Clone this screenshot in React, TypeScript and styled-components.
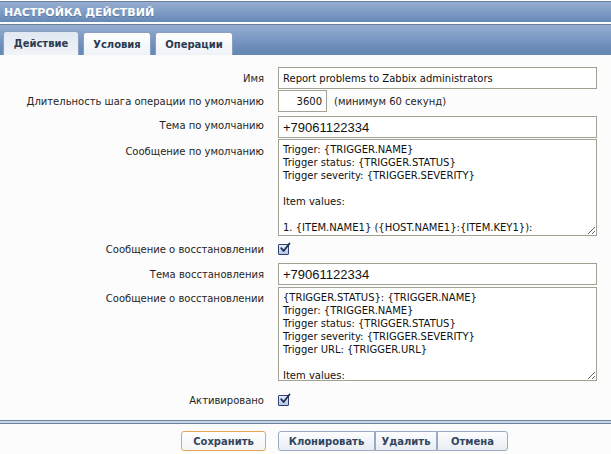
import React from 'react'
import styled, { createGlobalStyle } from 'styled-components'

const GlobalStyle = createGlobalStyle`
  html, body {
    margin: 0;
    padding: 0;
    background: #fcfcfc;
  }
  body {
    font-family: "DejaVu Sans", Verdana, sans-serif;
    font-size: 10px;
    color: #1f1f1f;
  }
`

const Page = styled.div`
  width: 611px;
  height: 454px;
  overflow: hidden;
  background: #fcfcfc;
  display: flex;
  flex-direction: column;
`

const TitleBar = styled.header`
  margin-top: 1px;
  height: 20px;
  border-top: 1px solid #6b7e97;
  background: linear-gradient(#96aed1, #6689b6);
  display: flex;
  align-items: center;
  padding-left: 4px;
`

const Title = styled.h1`
  margin: 0;
  font-size: 11px;
  font-weight: bold;
  color: #fff;
  text-shadow: 0 1px 0 rgba(40, 60, 90, 0.35);
`

const TabBar = styled.nav`
  margin-top: 2px;
  height: 30px;
  border-top: 1px solid #6b7e97;
  background: linear-gradient(#96aed1 0%, #6a8cb8 75%, #6588b4 100%);
  display: flex;
  align-items: flex-end;
  gap: 4px;
  padding-left: 3px;
`

const Tab = styled.div<{ $active?: boolean; $width: number }>`
  box-sizing: border-box;
  width: ${p => p.$width}px;
  height: ${p => (p.$active ? 24 : 23)}px;
  display: flex;
  align-items: center;
  justify-content: center;
  border: 1px solid #8aa0bf;
  border-bottom: none;
  border-radius: 3px 3px 0 0;
  background: ${p =>
    p.$active
      ? 'linear-gradient(#e1e8f1, #f1f4f8)'
      : 'linear-gradient(#ffffff, #eef2f7)'};
  font-weight: bold;
  font-size: 10px;
  color: #2b3a50;
`

const Form = styled.section`
  padding: 12px 14px 0 0;
  display: grid;
  grid-template-columns: 264px 1fr;
  column-gap: 14px;
  row-gap: 1px;
`

const Label = styled.label<{ $top?: boolean }>`
  text-align: right;
  align-self: ${p => (p.$top ? 'start' : 'center')};
  padding-top: ${p => (p.$top ? 7 : 0)}px;
  white-space: nowrap;
`

const Field = styled.div<{ $height: number; $spaceTop?: number }>`
  height: ${p => p.$height}px;
  margin-top: ${p => p.$spaceTop ?? 0}px;
  display: flex;
  align-items: center;
  gap: 7px;
`

const TextInput = styled.input<{ $large?: boolean; $width?: number; $right?: boolean }>`
  box-sizing: border-box;
  width: ${p => (p.$width ? `${p.$width}px` : '100%')};
  height: 22px;
  border: 1px solid #a3a194;
  background: #fff;
  padding: 0 4px;
  font-family: ${p =>
    p.$large ? '"Liberation Sans", Arial, sans-serif' : '"DejaVu Sans", Verdana, sans-serif'};
  font-size: ${p => (p.$large ? 13 : 10)}px;
  color: #111;
  text-align: ${p => (p.$right ? 'right' : 'left')};
  outline: none;
`

const Hint = styled.span`
  color: #1f1f1f;
`

const TextArea = styled.textarea<{ $height: number }>`
  box-sizing: border-box;
  width: 100%;
  height: ${p => p.$height}px;
  border: 1px solid #a3a194;
  background: #fff;
  padding: 3px 4px;
  font-family: "DejaVu Sans", Verdana, sans-serif;
  font-size: 10px;
  line-height: 13px;
  color: #111;
  resize: vertical;
  overflow: hidden;
  outline: none;
`

const CheckBox = styled.span`
  box-sizing: border-box;
  width: 11px;
  height: 11px;
  border: 1px solid #2f4272;
  border-radius: 1px;
  background: linear-gradient(#e6edf9, #b4c6e6);
  position: relative;
  svg {
    position: absolute;
    left: 0;
    top: -3px;
  }
`

const Footer = styled.footer`
  margin-top: auto;
  margin-bottom: 3px;
`

const Rule = styled.div`
  height: 2px;
  border-top: 1px solid #6f839d;
  border-bottom: 1px solid #6f839d;
  background: #c7d5e8;
`

const Buttons = styled.div`
  padding: 7px 0 0 181px;
  display: flex;
  gap: 12px;
`

const ButtonGroup = styled.div`
  display: flex;
`

const Button = styled.button<{ $primary?: boolean; $width: number }>`
  box-sizing: border-box;
  width: ${p => p.$width}px;
  height: 20px;
  padding: 0;
  border: 1px solid ${p => (p.$primary ? '#e6a650' : '#9aaac2')};
  border-radius: 3px;
  background: ${p =>
    p.$primary
      ? 'linear-gradient(#ffffff, #f2f4f7)'
      : 'linear-gradient(#fdfdfe, #e8edf3)'};
  font-family: "DejaVu Sans", Verdana, sans-serif;
  font-weight: bold;
  font-size: 10px;
  color: #33455e;
  ${ButtonGroup} > & {
    border-radius: 0;
  }
  ${ButtonGroup} > & + & {
    border-left: none;
  }
  ${ButtonGroup} > &:first-child {
    border-radius: 3px 0 0 3px;
  }
  ${ButtonGroup} > &:last-child {
    border-radius: 0 3px 3px 0;
  }
`

const Check = () => (
  <CheckBox>
    <svg width="12" height="12" viewBox="0 0 12 12">
      <path d="M2.2 6.2 L4.6 9 L10.5 1.5" fill="none" stroke="#1d2b55" strokeWidth="1.8" strokeLinecap="round" strokeLinejoin="round" />
    </svg>
  </CheckBox>
)

const defaultMessage = `Trigger: {TRIGGER.NAME}
Trigger status: {TRIGGER.STATUS}
Trigger severity: {TRIGGER.SEVERITY}

Item values:

1. {ITEM.NAME1} ({HOST.NAME1}:{ITEM.KEY1}): {ITEM.VALUE1}`

const recoveryMessage = `{TRIGGER.STATUS}: {TRIGGER.NAME}
Trigger: {TRIGGER.NAME}
Trigger status: {TRIGGER.STATUS}
Trigger severity: {TRIGGER.SEVERITY}
Trigger URL: {TRIGGER.URL}

Item values:`

const App = () => {
  return (
    <Page>
      <GlobalStyle />
      <TitleBar>
        <Title>НАСТРОЙКА ДЕЙСТВИЙ</Title>
      </TitleBar>
      <TabBar>
        <Tab $active $width={76}>Действие</Tab>
        <Tab $width={68}>Условия</Tab>
        <Tab $width={78}>Операции</Tab>
      </TabBar>

      <Form>
        <Label>Имя</Label>
        <Field $height={22}>
          <TextInput defaultValue="Report problems to Zabbix administrators" />
        </Field>

        <Label>Длительность шага операции по умолчанию</Label>
        <Field $height={22}>
          <TextInput $width={49} $right defaultValue="3600" />
          <Hint>(минимум 60 секунд)</Hint>
        </Field>

        <Label>Тема по умолчанию</Label>
        <Field $height={22} $spaceTop={3}>
          <TextInput $large defaultValue="+79061122334" />
        </Field>

        <Label $top>Сообщение по умолчанию</Label>
        <Field $height={97}>
          <TextArea $height={97} defaultValue={defaultMessage} />
        </Field>

        <Label>Сообщение о восстановлении</Label>
        <Field $height={25}>
          <Check />
        </Field>

        <Label>Тема восстановления</Label>
        <Field $height={22}>
          <TextInput $large defaultValue="+79061122334" />
        </Field>

        <Label $top>Сообщение о восстановлении</Label>
        <Field $height={94} $spaceTop={1}>
          <TextArea $height={94} defaultValue={recoveryMessage} />
        </Field>

        <Label>Активировано</Label>
        <Field $height={36}>
          <Check />
        </Field>
      </Form>

      <Footer>
        <Rule />
        <Buttons>
          <Button $primary $width={85}>Сохранить</Button>
          <ButtonGroup>
            <Button $width={97}>Клонировать</Button>
            <Button $width={62}>Удалить</Button>
            <Button $width={71}>Отмена</Button>
          </ButtonGroup>
        </Buttons>
      </Footer>
    </Page>
  )
}

export default App
